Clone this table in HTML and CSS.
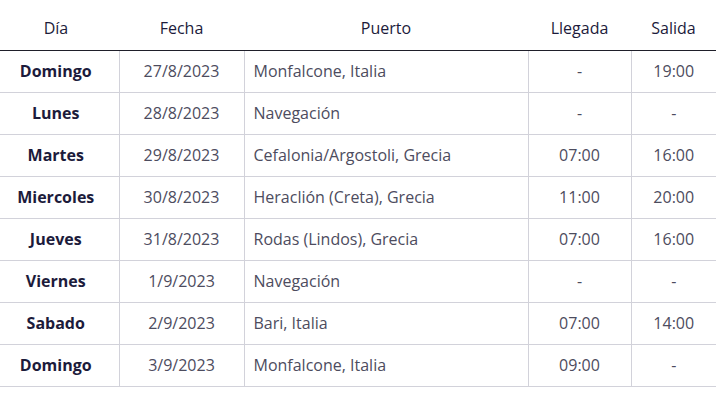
FILE: index.html
```html
<!DOCTYPE html>
<html lang="es">
<head>
<meta charset="utf-8">
<link rel="stylesheet" href="styles.css">
</head>
<body>
<table class="itinerary">
  <colgroup>
    <col class="c-day"><col class="c-date"><col class="c-port"><col class="c-arr"><col class="c-dep">
  </colgroup>
  <thead>
    <tr><th>Día</th><th>Fecha</th><th>Puerto</th><th>Llegada</th><th>Salida</th></tr>
  </thead>
  <tbody>
    <tr><td class="day">Domingo</td><td>27/8/2023</td><td class="port">Monfalcone, Italia</td><td>-</td><td>19:00</td></tr>
    <tr><td class="day">Lunes</td><td>28/8/2023</td><td class="port">Navegación</td><td>-</td><td>-</td></tr>
    <tr><td class="day">Martes</td><td>29/8/2023</td><td class="port">Cefalonia/Argostoli, Grecia</td><td>07:00</td><td>16:00</td></tr>
    <tr><td class="day">Miercoles</td><td>30/8/2023</td><td class="port">Heraclión (Creta), Grecia</td><td>11:00</td><td>20:00</td></tr>
    <tr><td class="day">Jueves</td><td>31/8/2023</td><td class="port">Rodas (Lindos), Grecia</td><td>07:00</td><td>16:00</td></tr>
    <tr><td class="day">Viernes</td><td>1/9/2023</td><td class="port">Navegación</td><td>-</td><td>-</td></tr>
    <tr><td class="day">Sabado</td><td>2/9/2023</td><td class="port">Bari, Italia</td><td>07:00</td><td>14:00</td></tr>
    <tr><td class="day">Domingo</td><td>3/9/2023</td><td class="port">Monfalcone, Italia</td><td>09:00</td><td>-</td></tr>
  </tbody>
</table>
</body>
</html>
```
FILE: styles.css
```css
html, body {
  margin: 0;
  padding: 0;
  background: #ffffff;
}
body {
  font-family: "Open Sans", "Liberation Sans", sans-serif;
  font-size: 16px;
}
.itinerary {
  width: 716px;
  border-collapse: collapse;
  table-layout: fixed;
}
.c-day { width: 119px; }
.c-date { width: 125px; }
.c-port { width: 284px; }
.c-arr { width: 103px; }
.c-dep { width: 85px; }
.itinerary th {
  height: 50px;
  padding: 6px 0 0 0;
  box-sizing: border-box;
  font-weight: 400;
  color: #1c1b3b;
  text-align: center;
  vertical-align: middle;
  border-bottom: 1px solid #1f1f2a;
}
.itinerary th:first-child {
  padding-right: 7px;
}
.itinerary td {
  height: 41px;
  padding: 0;
  text-align: center;
  vertical-align: middle;
  color: #4d4c5e;
  border-bottom: 1px solid #d2d2da;
  border-left: 1px solid #d2d2da;
}
.itinerary td:first-child {
  border-left: none;
}
.itinerary td.day {
  font-weight: 700;
  color: #1c1b3b;
  padding-right: 7px;
}
.itinerary td.port {
  text-align: left;
  padding-left: 9px;
}
```
